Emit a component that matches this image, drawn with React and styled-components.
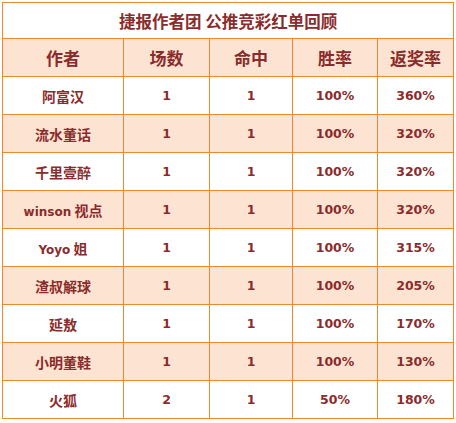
import React from 'react'
import styled, { createGlobalStyle } from 'styled-components'

const GlobalStyle = createGlobalStyle`
  html, body {
    margin: 0;
    padding: 0;
    background: #ffffff;
  }
  body {
    font-family: "Noto Sans CJK SC", "DejaVu Sans", sans-serif;
  }
`

const Page = styled.div`
  padding: 2px 3px 0 2px;
`

const Table = styled.table`
  width: 451px;
  border-collapse: collapse;
  table-layout: fixed;
  color: #8b2c2c;
`

const TitleCell = styled.th`
  box-sizing: border-box;
  height: 36px;
  padding: 0;
  border: 1px solid #f0892e;
  font-size: 16.5px;
  font-weight: 700;
  text-align: center;
  background: #ffffff;
`

const HeadRow = styled.tr`
  background: #fde4d2;
`

const HeadCell = styled.th`
  box-sizing: border-box;
  height: 38px;
  padding: 0;
  border: 1px solid #f0892e;
  font-size: 17px;
  font-weight: 700;
  text-align: center;
`

const Row = styled.tr`
  background: ${p => (p.$shaded ? '#fde4d2' : '#ffffff')};
`

const Cell = styled.td`
  box-sizing: border-box;
  height: 38px;
  padding: 0;
  border: 1px solid #f0892e;
  text-align: center;
  font-weight: 700;
  font-size: ${p => (p.$num ? '12.5px' : '14px')};
  font-family: ${p =>
    p.$num
      ? '"DejaVu Sans", sans-serif'
      : '"Noto Sans CJK SC", "DejaVu Sans", sans-serif'};
`

const Name = styled.span`
  font-size: 14px;
  & .latin {
    font-family: "DejaVu Sans", sans-serif;
    font-size: 12px;
  }
`

const rows = [
  ['阿富汉', 1, 1, '100%', '360%'],
  ['流水董话', 1, 1, '100%', '320%'],
  ['千里壹醉', 1, 1, '100%', '320%'],
  ['winson 视点', 1, 1, '100%', '320%'],
  ['Yoyo 姐', 1, 1, '100%', '315%'],
  ['渣叔解球', 1, 1, '100%', '205%'],
  ['延敖', 1, 1, '100%', '170%'],
  ['小明董鞋', 1, 1, '100%', '130%'],
  ['火狐', 2, 1, '50%', '180%'],
]

function renderName(name) {
  const m = name.match(/^([A-Za-z]+)(.*)$/)
  if (!m) return <Name>{name}</Name>
  return (
    <Name>
      <span className="latin">{m[1]}</span>
      {m[2]}
    </Name>
  )
}

export default function App() {
  return (
    <Page>
      <GlobalStyle />
      <Table>
        <colgroup>
          <col style={{ width: 121 }} />
          <col style={{ width: 86 }} />
          <col style={{ width: 83 }} />
          <col style={{ width: 85 }} />
          <col style={{ width: 76 }} />
        </colgroup>
        <thead>
          <tr>
            <TitleCell colSpan={5}>捷报作者团 公推竞彩红单回顾</TitleCell>
          </tr>
          <HeadRow>
            <HeadCell>作者</HeadCell>
            <HeadCell>场数</HeadCell>
            <HeadCell>命中</HeadCell>
            <HeadCell>胜率</HeadCell>
            <HeadCell>返奖率</HeadCell>
          </HeadRow>
        </thead>
        <tbody>
          {rows.map((r, i) => (
            <Row key={r[0]} $shaded={i % 2 === 1}>
              <Cell>{renderName(r[0])}</Cell>
              <Cell $num>{r[1]}</Cell>
              <Cell $num>{r[2]}</Cell>
              <Cell $num>{r[3]}</Cell>
              <Cell $num>{r[4]}</Cell>
            </Row>
          ))}
        </tbody>
      </Table>
    </Page>
  )
}
